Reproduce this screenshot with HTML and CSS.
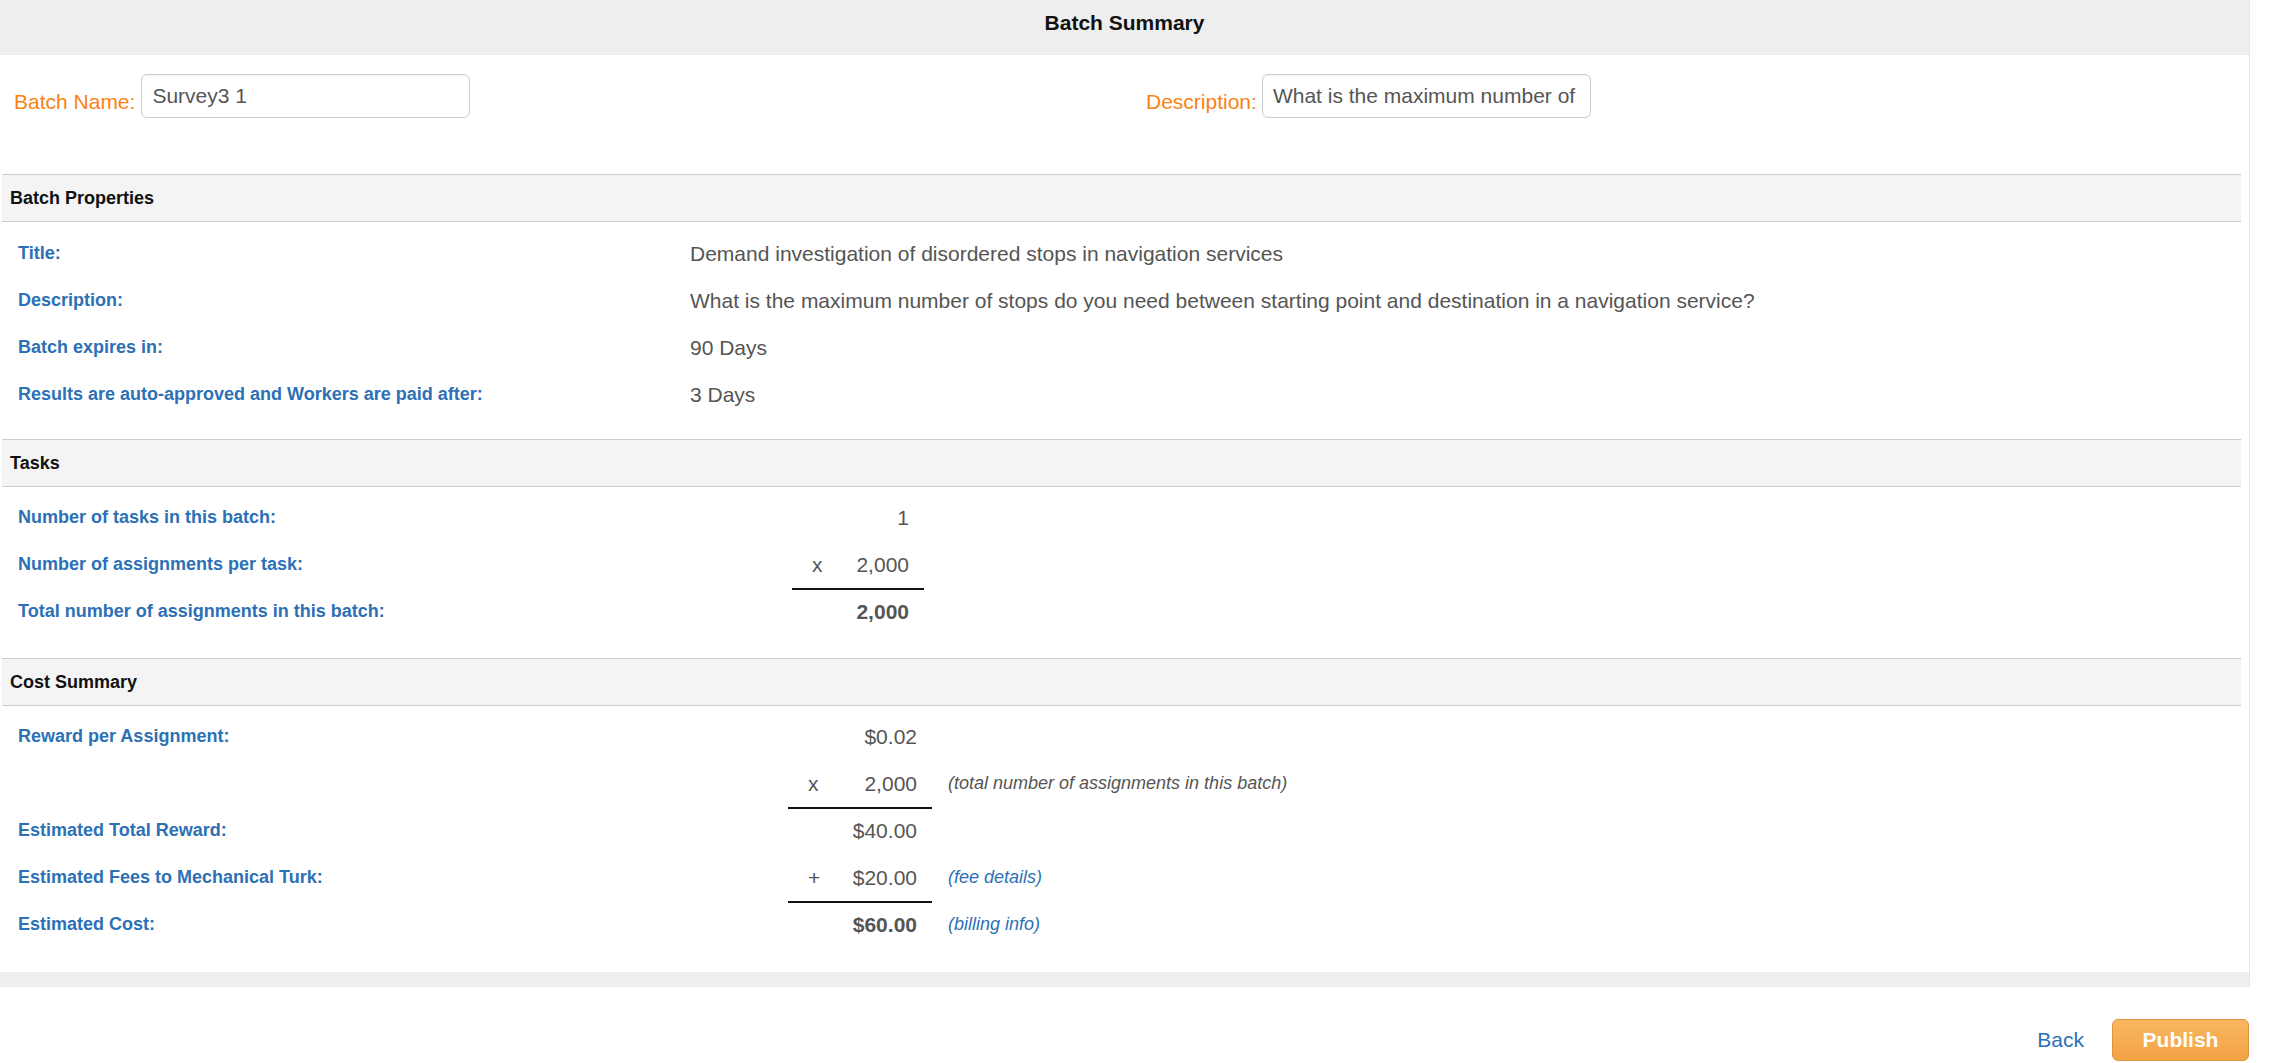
FILE: index.html
```html
<!DOCTYPE html>
<html lang="en">
<head>
<meta charset="utf-8">
<title>Batch Summary</title>
<link rel="stylesheet" href="styles.css">
</head>
<body>
<div class="page">
  <div class="title-bar">Batch Summary</div>

  <div class="name-row">
    <div class="field">
      <label class="field-label" for="batch-name">Batch Name:</label>
      <input class="field-input" id="batch-name" type="text" value="Survey3 1">
    </div>
    <div class="field field-right">
      <label class="field-label" for="batch-desc">Description:</label>
      <input class="field-input" id="batch-desc" type="text" value="What is the maximum number of stops do you need between starting point and destination in a navigation service?">
    </div>
  </div>

  <section class="panel panel-first">
    <h2 class="panel-head">Batch Properties</h2>
    <div class="props">
      <div class="row-label">Title:</div>
      <div class="prop-value">Demand investigation of disordered stops in navigation services</div>
      <div class="row-label">Description:</div>
      <div class="prop-value">What is the maximum number of stops do you need between starting point and destination in a navigation service?</div>
      <div class="row-label">Batch expires in:</div>
      <div class="prop-value">90 Days</div>
      <div class="row-label">Results are auto-approved and Workers are paid after:</div>
      <div class="prop-value">3 Days</div>
    </div>
  </section>

  <section class="panel">
    <h2 class="panel-head">Tasks</h2>
    <div class="calc calc-tasks">
      <div class="row-label">Number of tasks in this batch:</div>
      <div class="num"><span class="op"></span><span>1</span></div>
      <div class="note"></div>

      <div class="row-label">Number of assignments per task:</div>
      <div class="num num-line"><span class="op">x</span><span>2,000</span></div>
      <div class="note"></div>

      <div class="row-label">Total number of assignments in this batch:</div>
      <div class="num num-total"><span class="op"></span><span>2,000</span></div>
      <div class="note"></div>
    </div>
  </section>

  <section class="panel">
    <h2 class="panel-head">Cost Summary</h2>
    <div class="calc calc-cost">
      <div class="row-label">Reward per Assignment:</div>
      <div class="num"><span class="op"></span><span>$0.02</span></div>
      <div class="note"></div>

      <div class="row-label"></div>
      <div class="num num-line"><span class="op">x</span><span>2,000</span></div>
      <div class="note">(total number of assignments in this batch)</div>

      <div class="row-label">Estimated Total Reward:</div>
      <div class="num"><span class="op"></span><span>$40.00</span></div>
      <div class="note"></div>

      <div class="row-label">Estimated Fees to Mechanical Turk:</div>
      <div class="num num-line"><span class="op">+</span><span>$20.00</span></div>
      <div class="note"><a class="note-link" href="#">(fee details)</a></div>

      <div class="row-label">Estimated Cost:</div>
      <div class="num num-total"><span class="op"></span><span>$60.00</span></div>
      <div class="note"><a class="note-link" href="#">(billing info)</a></div>
    </div>
  </section>

  <div class="footer-bar"></div>
</div>

<div class="actions">
  <a class="back-link" href="#">Back</a>
  <button class="publish-btn" type="button">Publish</button>
</div>
</body>
</html>
```

FILE: styles.css
```css
* {
  box-sizing: border-box;
}

body {
  margin: 0;
  background: #fff;
  font-family: "Liberation Sans", Arial, sans-serif;
  color: #555;
}

.page {
  width: 2250px;
  border-right: 1px solid #e6e6e6;
  background: #fff;
}

.title-bar {
  height: 55px;
  padding-top: 8px;
  background: #eee;
  color: #111;
  font-size: 21px;
  font-weight: bold;
  line-height: 30px;
  text-align: center;
}

.name-row {
  display: grid;
  grid-template-columns: 1121px 1fr;
  padding-top: 19px;
}

.field {
  display: flex;
  align-items: flex-end;
  gap: 6px;
  padding-left: 14px;
}

.field-right {
  padding-left: 25px;
  gap: 5px;
}

.field-label {
  color: #f98215;
  font-size: 21px;
  line-height: 30px;
  margin-bottom: 1px;
}

.field-input {
  width: 329px;
  height: 44px;
  padding: 0 10px;
  border: 1px solid #ccc;
  border-radius: 6px;
  box-shadow: inset 0 1px 1px rgba(0, 0, 0, 0.04);
  font-family: "Liberation Sans", Arial, sans-serif;
  font-size: 21px;
  color: #555;
  background: #fff;
  outline: none;
}

.panel {
  margin: 0 8px 0 2px;
}

.panel-first {
  margin-top: 56px;
}

.panel-head {
  margin: 0;
  padding-left: 8px;
  background: #f4f4f4;
  border-top: 1px solid #ccc;
  border-bottom: 1px solid #ccc;
  color: #111;
  font-size: 18px;
  font-weight: bold;
  line-height: 46px;
}

.row-label {
  color: #2c70b5;
  font-size: 18px;
  font-weight: bold;
  line-height: 47px;
  white-space: nowrap;
}

.props {
  display: grid;
  grid-template-columns: 672px 1fr;
  padding: 8px 0 21px 16px;
}

.prop-value {
  font-size: 21px;
  line-height: 47px;
  color: #555;
  white-space: nowrap;
}

.calc {
  display: grid;
  padding-left: 16px;
}

.calc-tasks {
  grid-template-columns: 774px 132px 1fr;
  padding-top: 7px;
  padding-bottom: 23px;
}

.calc-cost {
  grid-template-columns: 770px 144px 1fr;
  padding-top: 7px;
  padding-bottom: 24px;
}

.num {
  display: flex;
  justify-content: space-between;
  padding: 0 15px 0 20px;
  font-size: 21px;
  line-height: 47px;
  color: #555;
}

.op {
  min-width: 10px;
}

.num-line {
  box-shadow: 0 2px 0 #111;
}

.num-total {
  font-weight: bold;
}

.note {
  padding-left: 16px;
  font-size: 18px;
  font-style: italic;
  line-height: 47px;
  color: #555;
  white-space: nowrap;
}

.note-link {
  color: #2c70b5;
  text-decoration: none;
}

.footer-bar {
  height: 15px;
  background: #eee;
}

.actions {
  display: flex;
  justify-content: flex-end;
  align-items: center;
  gap: 28px;
  width: 2249px;
  padding-top: 32px;
}

.back-link {
  color: #2c70b5;
  font-size: 21px;
  text-decoration: none;
}

.publish-btn {
  width: 137px;
  height: 42px;
  border: 1px solid #e0923c;
  border-radius: 6px;
  background: linear-gradient(#f8b760, #f3a244);
  color: #fff;
  font-family: "Liberation Sans", Arial, sans-serif;
  font-size: 21px;
  font-weight: bold;
  cursor: pointer;
}
```
